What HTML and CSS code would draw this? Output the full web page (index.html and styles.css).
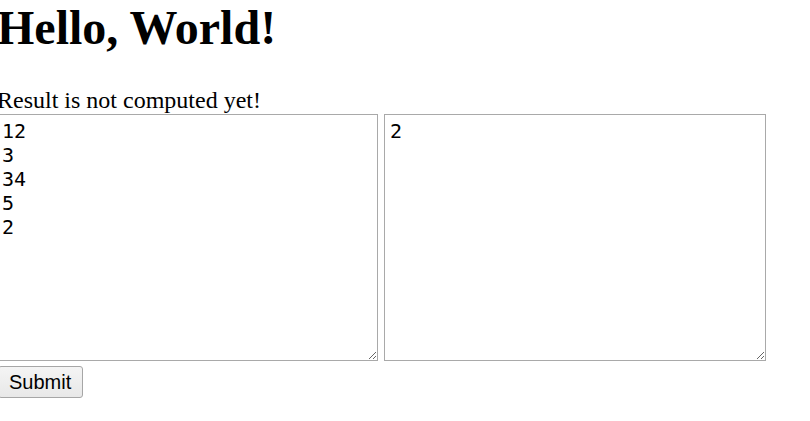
FILE: index.html
```html
<!DOCTYPE html>
<html>
<head>
<meta charset="utf-8">
<link rel="stylesheet" href="styles.css">
</head>
<body>
<div class="page">
  <h1 class="title">Hello, World!</h1>
  <div class="result">Result is not computed yet!</div>
  <form class="form">
    <div class="fields">
      <textarea class="area">12
3
34
5
2</textarea>
      <textarea class="area">2</textarea>
    </div>
    <button class="submit" type="button">Submit</button>
  </form>
</div>
</body>
</html>
```
FILE: styles.css
```css
html, body {
  margin: 0;
  padding: 0;
  background: #fff;
}
.page {
  margin-left: -4px;
  font-family: "Liberation Serif", "Times New Roman", serif;
  font-size: 24px;
  color: #000;
}
.title {
  font-size: 48px;
  font-weight: bold;
  margin: 0 0 32px 0;
  line-height: 55px;
  padding-left: 1px;
}
.result {
  line-height: 27px;
  padding-left: 1px;
}
.form {
  margin: 0;
  display: flex;
  flex-direction: column;
  align-items: flex-start;
  gap: 5px;
}
.fields {
  display: flex;
  gap: 6px;
}
.area {
  box-sizing: border-box;
  width: 382px;
  height: 247px;
  margin: 0;
  border: 1px solid #a9a9a9;
  padding: 4px 3px 3px 5px;
  font-family: "DejaVu Sans Mono", monospace;
  font-size: 20px;
  line-height: 24px;
  color: #000;
  background: #fff;
}
.submit {
  margin-left: 2px;
  height: 32px;
  padding: 0 11px 0 10px;
  font-family: "Liberation Sans", Arial, sans-serif;
  font-size: 20px;
  color: #000;
  background: linear-gradient(#f4f4f4, #e8e8e8);
  border: 1px solid #a6a6a6;
  border-radius: 3px;
}
```
